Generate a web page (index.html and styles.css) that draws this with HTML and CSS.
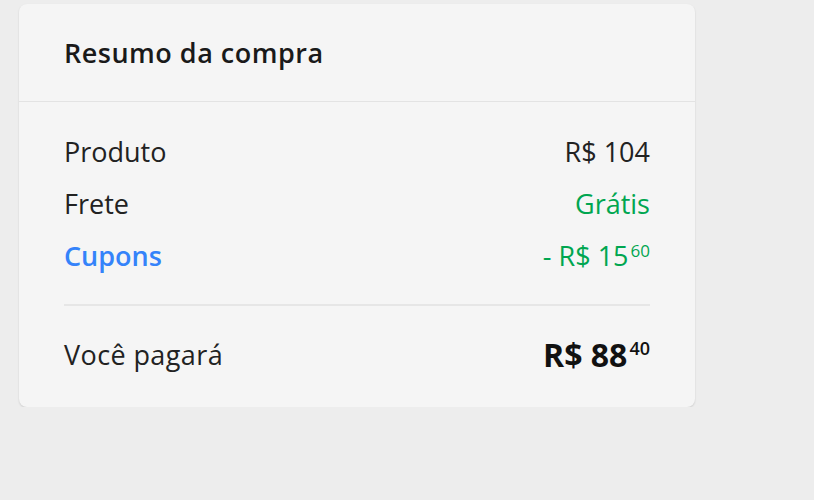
FILE: index.html
```html
<!DOCTYPE html>
<html lang="pt-BR">
<head>
  <meta charset="UTF-8">
  <meta name="viewport" content="width=device-width, initial-scale=1.0">
  <title>Resumo da compra</title>
  <link rel="stylesheet" href="styles.css">
</head>
<body>

  <!-- Resumo -->
  <div class="summary">
    <div class="summary-header">
      <h2 class="summary-title">Resumo da compra</h2>
    </div>

    <div class="summary-body">
      <div class="row">
        <span>Produto</span>
        <span>R$ 104</span>
      </div>
      <div class="row">
        <span>Frete</span>
        <span class="green">Grátis</span>
      </div>
      <div class="row">
        <span class="coupon">Cupons</span>
        <span class="green">- R$ 15<sup class="cents">60</sup></span>
      </div>

      <hr class="divider">

      <div class="row total">
        <span class="total-label">Você pagará</span>
        <span class="total-price">R$ 88<sup class="cents">40</sup></span>
      </div>
    </div>
  </div>

</body>
</html>
```

FILE: styles.css
```css
* {
  margin: 0;
  padding: 0;
  box-sizing: border-box;
}

body {
  font-family: "Open Sans", "Noto Sans", sans-serif;
  background-color: #ededed;
  color: #333;
  padding: 4px 0 0 19px;
}

/* Card */
.summary {
  width: 676px;
  height: 403px;
  background-color: #f5f5f5;
  border-radius: 8px;
  box-shadow: 0 1px 2px rgba(0, 0, 0, 0.14);
}

.summary-header {
  height: 98px;
  padding: 0 45px;
  display: flex;
  align-items: center;
  border-bottom: 1px solid #e3e3e3;
}

.summary-title {
  font-size: 27px;
  font-weight: 600;
  color: #1a1a1a;
  letter-spacing: 0.5px;
}

.summary-body {
  padding: 23px 45px 0;
}

.row {
  height: 52px;
  display: flex;
  align-items: center;
  justify-content: space-between;
  font-size: 27px;
  color: #222;
}

.green {
  color: #00a650;
}

.coupon {
  color: #3483fa;
  font-weight: 600;
}

.cents {
  font-size: 17px;
  vertical-align: 9px;
  margin-left: 2px;
}

.divider {
  border: none;
  border-top: 2px solid #e6e6e6;
  margin-top: 23px;
}

.total {
  margin-top: 22px;
}

.total-label {
  letter-spacing: 0.4px;
}

.total-price {
  font-size: 32px;
  font-weight: 700;
  color: #111;
}

.total-price .cents {
  font-size: 18px;
  font-weight: 600;
  vertical-align: 12px;
}
```
